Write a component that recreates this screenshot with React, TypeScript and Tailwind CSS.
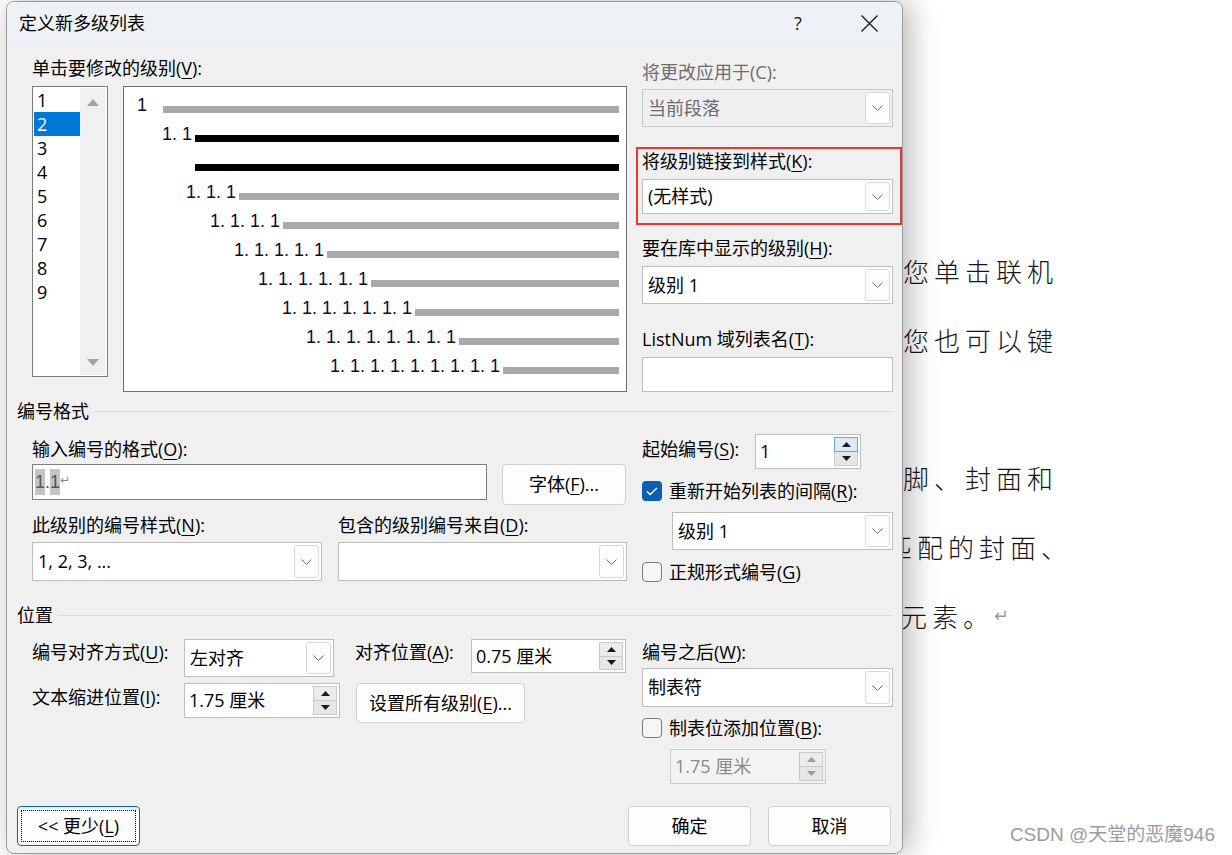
import React from 'react';

const Mn = ({ k }: { k: string }) => (
  <span className="underline underline-offset-[3px] decoration-1">{k}</span>
);

const Chevron = () => (
  <svg width="11" height="6" viewBox="0 0 11 6" fill="none">
    <path d="M0.5 0.5L5.5 5.5L10.5 0.5" stroke="#6e6e6e" strokeWidth="1" />
  </svg>
);

const Tri = ({ up, color = '#1a1a1a' }: { up?: boolean; color?: string }) => (
  <svg width="9" height="5" viewBox="0 0 9 5">
    <path d={up ? 'M0 5L4.5 0L9 5Z' : 'M0 0L4.5 5L9 0Z'} fill={color} />
  </svg>
);

const Combo = ({ value, className = '', disabled }: { value: string; className?: string; disabled?: boolean }) => (
  <div
    className={`flex items-center border pl-[5px] pr-[2px] ${
      disabled ? 'bg-[#efefef] border-[#c8c8c8] text-[#6d6d6d]' : 'bg-white border-[#bdbdbd] text-black'
    } ${className}`}
  >
    <span className="flex-1 whitespace-nowrap">{value}</span>
    <div className="w-[25px] self-stretch my-[2px] border border-[#d8d8d8] rounded-[3px] bg-[#fdfdfd] flex items-center justify-center">
      <Chevron />
    </div>
  </div>
);

const Spin = ({ value, className = '', disabled, hot }: { value: string; className?: string; disabled?: boolean; hot?: boolean }) => (
  <div
    className={`flex items-center border pl-[4px] pr-[2px] py-[2px] ${
      disabled ? 'bg-[#f3f3f3] border-[#cacaca] text-[#8a8a8a]' : 'bg-white border-[#bdbdbd] text-black'
    } ${className}`}
  >
    <span className="flex-1 whitespace-nowrap">{value}</span>
    <div className="w-[24px] self-stretch flex flex-col">
      <div
        className={`flex-1 border flex items-center justify-center ${
          hot ? 'bg-[#dcebf8] border-[#62a6e2]' : 'bg-[#ececec] border-[#c9c9c9]'
        }`}
      >
        <Tri up color={disabled ? '#9a9a9a' : '#1a1a1a'} />
      </div>
      <div className="flex-1 border border-t-0 border-[#c9c9c9] bg-[#e6e6e6] flex items-center justify-center">
        <Tri color={disabled ? '#9a9a9a' : '#1a1a1a'} />
      </div>
    </div>
  </div>
);

const Check = ({ on, label }: { on?: boolean; label: React.ReactNode }) => (
  <div className="flex items-center h-[20px]">
    {on ? (
      <div className="w-[20px] h-[20px] rounded-[4px] bg-[#0a5fb4] flex items-center justify-center">
        <svg width="12" height="9" viewBox="0 0 12 9" fill="none">
          <path d="M1 4.5L4.2 7.5L11 1" stroke="white" strokeWidth="1.3" />
        </svg>
      </div>
    ) : (
      <div className="w-[20px] h-[20px] rounded-[4px] border border-[#7b7b7b] bg-[#f6f6f6]" />
    )}
    <span className="ml-[7px] leading-[20px] whitespace-nowrap">{label}</span>
  </div>
);

const Btn = ({ children, className = '' }: { children: React.ReactNode; className?: string }) => (
  <div
    className={`flex items-center justify-center bg-[#fdfdfd] border border-[#d0d0d0] rounded-[4px] whitespace-nowrap ${className}`}
  >
    {children}
  </div>
);

const Header = ({ text }: { text: string }) => (
  <div className="flex items-center h-[24px]">
    <span className="leading-[24px] whitespace-nowrap">{text}</span>
    <div className="flex-1 h-px bg-[#dadada] ml-[5px]" />
  </div>
);

const previewRows = [
  { n: '1', w: 'w-[39px]', first: true, dark: false },
  { n: '1. 1', w: 'w-[71px]', first: false, dark: true },
  { n: '', w: 'w-[71px]', first: false, dark: true },
  { n: '1. 1. 1', w: 'w-[115px]', first: false, dark: false },
  { n: '1. 1. 1. 1', w: 'w-[159px]', first: false, dark: false },
  { n: '1. 1. 1. 1. 1', w: 'w-[203px]', first: false, dark: false },
  { n: '1. 1. 1. 1. 1. 1', w: 'w-[247px]', first: false, dark: false },
  { n: '1. 1. 1. 1. 1. 1. 1', w: 'w-[291px]', first: false, dark: false },
  { n: '1. 1. 1. 1. 1. 1. 1. 1', w: 'w-[335px]', first: false, dark: false },
  { n: '1. 1. 1. 1. 1. 1. 1. 1. 1', w: 'w-[379px]', first: false, dark: false },
];

const levels = [1, 2, 3, 4, 5, 6, 7, 8, 9];

export default function App() {
  return (
    <div className="relative w-[1232px] h-[855px] overflow-hidden bg-white">
      {/* document page behind the dialog */}
      <div className="absolute inset-0 pt-[236px] font-['Noto_Sans_CJK_SC',sans-serif] text-[26px] tracking-[5px] leading-[69px] text-[#161616] font-light">
        <div className="pl-[903px] whitespace-nowrap">您单击联机</div>
        <div className="pl-[903px] whitespace-nowrap">您也可以键</div>
        <div className="pl-[903px] whitespace-nowrap">&nbsp;</div>
        <div className="pl-[903px] whitespace-nowrap">脚、封面和</div>
        <div className="pl-[886px] whitespace-nowrap">匹配的封面、</div>
        <div className="pl-[901px] whitespace-nowrap flex items-center">
          <span>元素。</span>
          <span className="font-['DejaVu_Sans',sans-serif] text-[18px] text-[#9a9a9a] tracking-normal">↵</span>
        </div>
      </div>

      <div className="absolute right-[17px] bottom-[8px] font-['Liberation_Sans','Noto_Sans_CJK_SC',sans-serif] text-[19px] text-[#9b9b9b] leading-[24px]">
        CSDN @天堂的恶魔946
      </div>

      {/* dialog */}
      <div className="absolute left-[6px] top-[1px] w-[897px] h-[853px] rounded-[8px] border border-[#9c9c9c] bg-[#f0f0f0] shadow-[6px_0_30px_rgba(0,0,0,0.3)] flex flex-col overflow-hidden font-['Open_Sans','Noto_Sans_CJK_SC',sans-serif] text-[18px] text-black">
        {/* title bar */}
        <div className="h-[42px] bg-[#eef2f6] flex items-center">
          <span className="pl-[12px] leading-[42px]">定义新多级列表</span>
          <div className="ml-auto flex items-center">
            <div className="w-[46px] flex items-center justify-center text-[#1a1a1a]">?</div>
            <div className="w-[46px] ml-[25px] mr-[10px] flex items-center justify-center">
              <svg width="17" height="17" viewBox="0 0 17 17">
                <path d="M0.5 0.5L16.5 16.5M16.5 0.5L0.5 16.5" stroke="#1a1a1a" strokeWidth="1.3" />
              </svg>
            </div>
          </div>
        </div>

        {/* body */}
        <div className="flex-1 flex flex-col pl-[10px] pr-[9px]">
          {/* section 1 */}
          <div className="flex items-start ml-[15px]">
            <div className="w-[595px] mt-[12px]">
              <div className="leading-[24px]">
                单击要修改的级别(<Mn k="V" />):
              </div>
              <div className="flex mt-[6px]">
                <div className="w-[76px] h-[291px] border border-[#7a7a7a] bg-white flex">
                  <div className="flex-1 pt-px pl-px">
                    {levels.map((l) => (
                      <div
                        key={l}
                        className={`h-[24px] leading-[24px] pl-[3px] ${l === 2 ? 'bg-[#0078d7] text-white' : ''}`}
                      >
                        {l}
                      </div>
                    ))}
                  </div>
                  <div className="w-[26px] my-px mr-px bg-[#f0f0f0] flex flex-col items-center justify-between pt-[11px] pb-[9px]">
                    <svg width="12" height="7" viewBox="0 0 12 7">
                      <path d="M0 7L6 0L12 7Z" fill="#a3a3a3" />
                    </svg>
                    <svg width="12" height="7" viewBox="0 0 12 7">
                      <path d="M0 0L6 7L12 0Z" fill="#a3a3a3" />
                    </svg>
                  </div>
                </div>
                <div className="ml-[15px] w-[504px] h-[306px] border border-[#6f6f6f] bg-white pt-[5px] font-['Liberation_Sans',sans-serif] text-[#0b0b33]">
                  {previewRows.map((r, i) => (
                    <div key={i} className="flex items-end h-[29px]">
                      <div
                        className={`${r.w} shrink-0 flex mb-[8px] leading-[16px] whitespace-nowrap ${
                          r.first ? 'justify-start pl-[13px]' : 'justify-end pr-[3px]'
                        }`}
                      >
                        {r.n}
                      </div>
                      <div className={`flex-1 h-[7px] mb-[8px] mr-[7px] ${r.dark ? 'bg-black' : 'bg-[#a9a9a9]'}`} />
                    </div>
                  ))}
                </div>
              </div>
            </div>

            <div className="ml-[15px] w-[251px] mt-[16px]">
              <div className="leading-[24px] text-[#6d6d6d]">将更改应用于(C):</div>
              <Combo value="当前段落" disabled className="mt-[5px] h-[38px]" />
              <div className="mt-[20px] -ml-[6px] -mr-[9px] border-2 border-[#e53935] pl-[4px] pr-[7px] pb-[9px]">
                <div className="leading-[24px]">
                  将级别链接到样式(<Mn k="K" />):
                </div>
                <Combo value="(无样式)" className="mt-[6px] h-[35px]" />
              </div>
              <div className="mt-[11px] leading-[24px]">
                要在库中显示的级别(<Mn k="H" />):
              </div>
              <Combo value="级别 1" className="mt-[6px] h-[38px]" />
              <div className="mt-[23px] leading-[24px]">
                ListNum 域列表名(<Mn k="T" />):
              </div>
              <div className="mt-[6px] h-[35px] border border-[#bdbdbd] bg-white" />
            </div>
          </div>

          {/* section 2 */}
          <div className="mt-[7px]">
            <Header text="编号格式" />
          </div>
          <div className="flex items-start ml-[15px]">
            <div className="w-[595px]">
              <div className="mt-[14px] leading-[24px]">
                输入编号的格式(<Mn k="O" />):
              </div>
              <div className="flex mt-[3px] items-start">
                <div className="w-[455px] h-[36px] border border-[#7d7d7d] bg-white flex items-center pl-[2px] font-['Liberation_Sans',sans-serif] text-[#555]">
                  <span className="bg-[#c4c4c4] leading-[26px]">1</span>
                  <span className="leading-[26px]">.</span>
                  <span className="bg-[#c4c4c4] leading-[26px]">1</span>
                  <span className="font-['DejaVu_Sans',sans-serif] text-[12px] text-[#8a8a8a] -mt-[4px]">↵</span>
                </div>
                <Btn className="ml-[15px] w-[124px] h-[41px]">
                  字体(<Mn k="F" />)...
                </Btn>
              </div>
              <div className="flex mt-[8px] leading-[24px]">
                <div className="w-[306px]">
                  此级别的编号样式(<Mn k="N" />):
                </div>
                <div>
                  包含的级别编号来自(<Mn k="D" />):
                </div>
              </div>
              <div className="flex mt-[5px]">
                <Combo value="1, 2, 3, ..." className="w-[290px] h-[39px]" />
                <Combo value="" className="ml-[16px] w-[289px] h-[39px]" />
              </div>
            </div>

            <div className="ml-[15px] w-[251px]">
              <div className="flex items-start mt-[11px]">
                <div className="w-[113px] mt-[3px] leading-[24px]">
                  起始编号(<Mn k="S" />):
                </div>
                <Spin value="1" hot className="w-[106px] h-[35px]" />
              </div>
              <div className="mt-[12px]">
                <Check
                  on
                  label={
                    <>
                      重新开始列表的间隔(<Mn k="R" />):
                    </>
                  }
                />
              </div>
              <Combo value="级别 1" className="mt-[11px] ml-[30px] h-[38px]" />
              <div className="mt-[12px]">
                <Check
                  label={
                    <>
                      正规形式编号(<Mn k="G" />)
                    </>
                  }
                />
              </div>
            </div>
          </div>

          {/* section 3 */}
          <div className="mt-[21px]">
            <Header text="位置" />
          </div>
          <div className="flex items-start ml-[15px]">
            <div className="w-[595px]">
              <div className="flex items-start mt-[12px]">
                <div className="w-[152px] mt-px leading-[24px]">
                  编号对齐方式(<Mn k="U" />):
                </div>
                <Combo value="左对齐" className="w-[150px] h-[38px]" />
                <div className="ml-[21px] w-[116px] mt-px leading-[24px]">
                  对齐位置(<Mn k="A" />):
                </div>
                <Spin value="0.75 厘米" className="w-[155px] h-[34px]" />
              </div>
              <div className="flex items-start mt-[6px]">
                <div className="w-[152px] mt-[2px] leading-[24px]">
                  文本缩进位置(<Mn k="I" />):
                </div>
                <Spin value="1.75 厘米" className="w-[156px] h-[35px]" />
                <Btn className="ml-[16px] w-[169px] h-[40px]">
                  设置所有级别(<Mn k="E" />)...
                </Btn>
              </div>
            </div>

            <div className="ml-[15px] w-[251px]">
              <div className="mt-[13px] leading-[24px]">
                编号之后(<Mn k="W" />):
              </div>
              <Combo value="制表符" className="mt-[4px] h-[39px]" />
              <div className="mt-[11px]">
                <Check
                  label={
                    <>
                      制表位添加位置(<Mn k="B" />):
                    </>
                  }
                />
              </div>
              <Spin value="1.75 厘米" disabled className="mt-[11px] ml-[28px] w-[156px] h-[35px]" />
            </div>
          </div>

          {/* footer */}
          <div className="flex mt-[22px]">
            <div className="w-[123px] h-[40px] rounded-[4px] border border-[#0067c0] bg-[#fdfdfd] p-[3px]">
              <div className="w-full h-full border border-dotted border-black flex items-center justify-center whitespace-nowrap">
                &lt;&lt; 更少(<Mn k="L" />)
              </div>
            </div>
            <Btn className="ml-auto w-[123px] h-[40px]">确定</Btn>
            <Btn className="ml-[17px] mr-[2px] w-[123px] h-[40px]">取消</Btn>
          </div>
        </div>
      </div>
    </div>
  );
}
